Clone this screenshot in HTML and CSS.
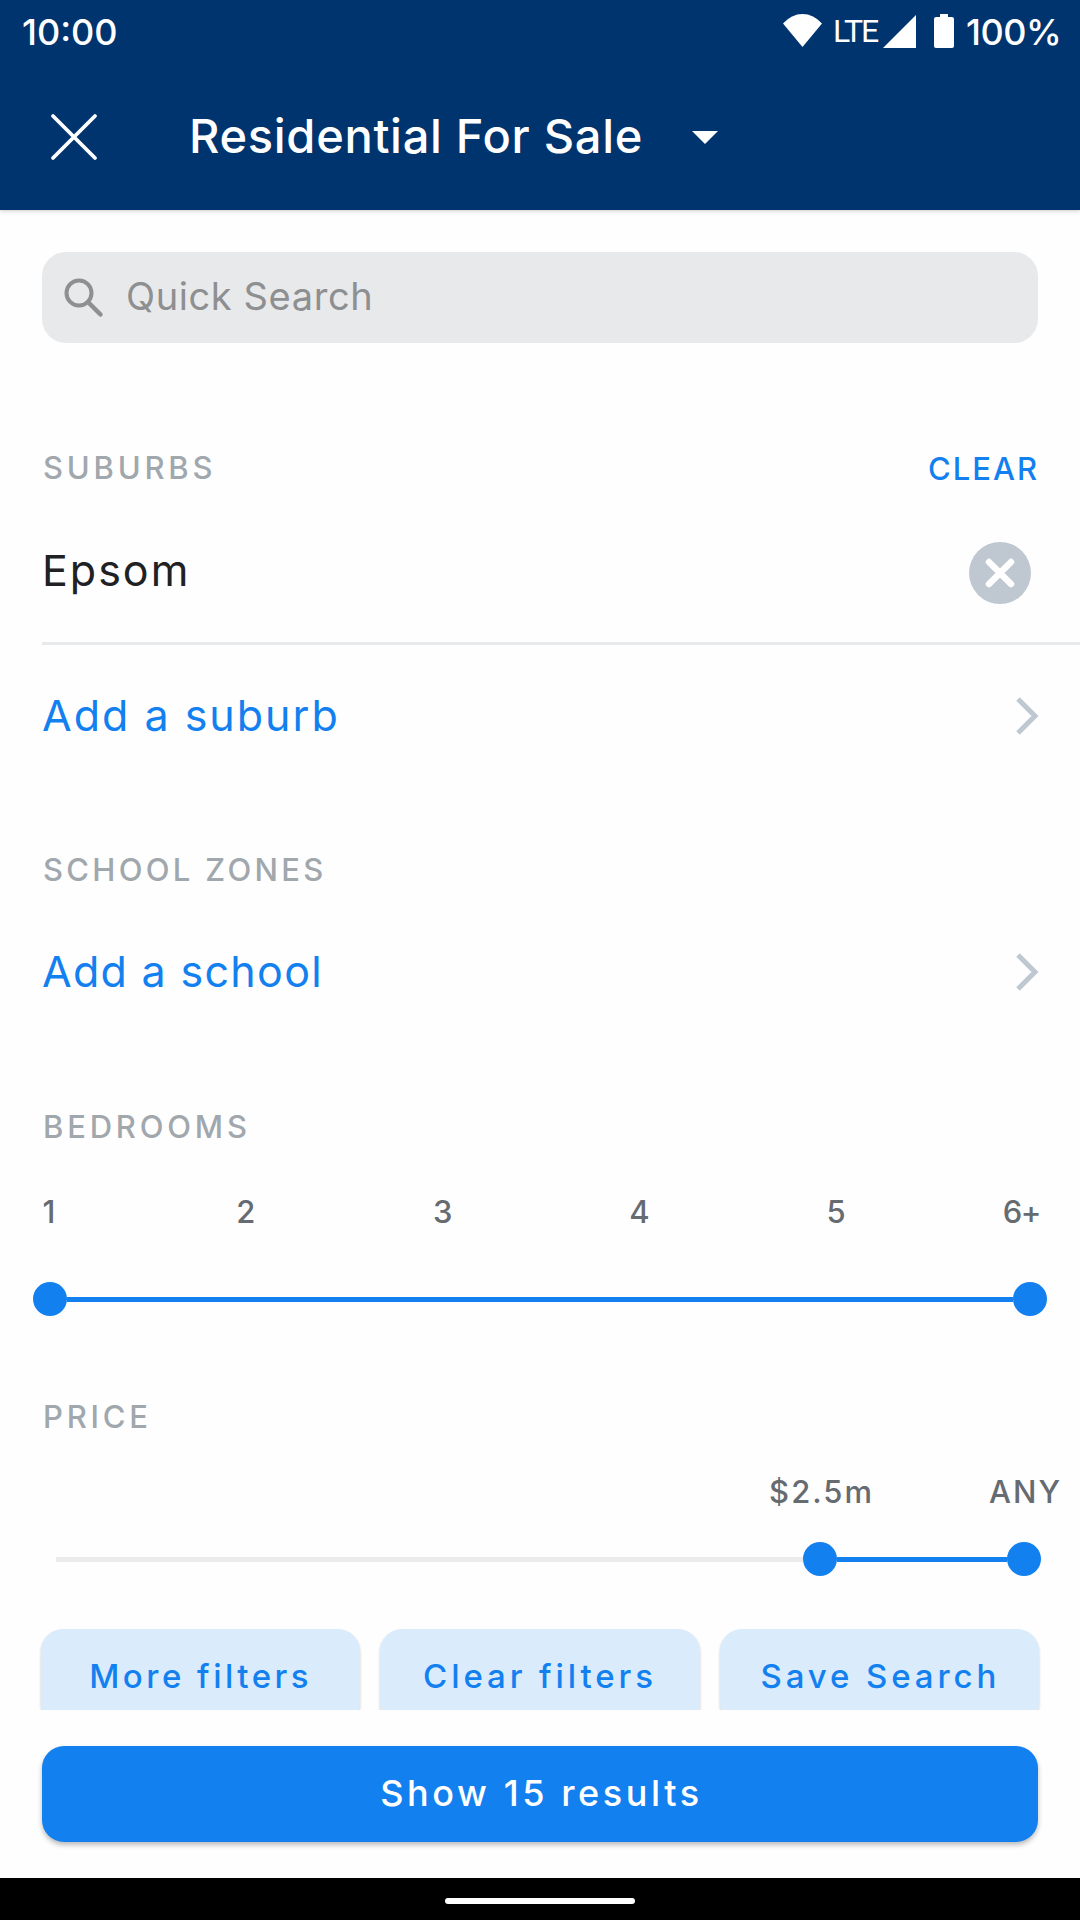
FILE: index.html
```html
<!DOCTYPE html>
<html lang="en">
<head>
  <meta charset="UTF-8">
  <meta name="viewport" content="width=device-width, initial-scale=1.0">
  <title>Residential For Sale</title>
  <link rel="stylesheet" href="styles.css">
</head>
<body>
  <header class="header">
    <div class="status-bar">
      <span class="time">10:00</span>
      <div class="status-icons">
        <svg class="wifi" width="39" height="33" viewBox="0 0 39 33"><path d="M0 9.500Q8.500 0 19.500 0T39 9.500L19.500 33z" fill="#fff"/></svg>
        <span class="lte">LTE</span>
        <svg class="signal" width="33" height="33" viewBox="0 0 33 33"><path d="M33 0v33H0z" fill="#fff"/></svg>
        <svg class="battery" width="20" height="34" viewBox="0 0 20 34"><path d="M6 0h8v3h4q2 0 2 2v27q0 2-2 2H2q-2 0-2-2V5q0-2 2-2h4z" fill="#fff"/></svg>
        <span class="percent">100%</span>
      </div>
    </div>
    <div class="app-bar">
      <svg class="close" width="48" height="48" viewBox="0 0 48 48"><path d="M3 3l42 42M45 3L3 45" stroke="#fff" stroke-width="3.800" stroke-linecap="round"/></svg>
      <h1 class="title">Residential For Sale</h1>
      <svg class="caret" width="26" height="13" viewBox="0 0 26 13"><path d="M0 0h26L13 13z" fill="#fff"/></svg>
    </div>
  </header>

  <main class="filters">
    <div class="search">
      <svg width="40" height="40" viewBox="0 0 40 40" fill="none" stroke="#8e8f91" stroke-width="4"><circle cx="15" cy="15" r="12.500"/><path d="M24 24l12.500 12.500" stroke-width="4.500" stroke-linecap="round"/></svg>
      <span class="placeholder">Quick Search</span>
    </div>

    <section class="suburbs">
      <div class="heading">
        <h2 class="label">SUBURBS</h2>
        <a class="clear">CLEAR</a>
      </div>
      <div class="row divided">
        <span class="suburb">Epsom</span>
        <svg class="remove" width="62" height="62" viewBox="0 0 62 62"><circle cx="31" cy="31" r="31" fill="#bfc8d0"/><path d="M20 20l22 22M42 20L20 42" stroke="#fff" stroke-width="6.500" stroke-linecap="round"/></svg>
      </div>
      <div class="row">
        <a class="add add-suburb">Add a suburb</a>
        <svg class="chevron" width="24" height="38" viewBox="0 0 24 38"><path d="M3 2l17 17L3 36" fill="none" stroke="#bfc8d0" stroke-width="5"/></svg>
      </div>
    </section>

    <section class="schools">
      <div class="heading"><h2 class="label">SCHOOL ZONES</h2></div>
      <div class="row">
        <a class="add add-school">Add a school</a>
        <svg class="chevron" width="24" height="38" viewBox="0 0 24 38"><path d="M3 2l17 17L3 36" fill="none" stroke="#bfc8d0" stroke-width="5"/></svg>
      </div>
    </section>

    <section class="bedrooms">
      <div class="heading"><h2 class="label">BEDROOMS</h2></div>
      <div class="ticks">
        <span>1</span><span>2</span><span>3</span><span>4</span><span>5</span><span>6+</span>
      </div>
      <div class="slider">
        <i class="thumb"></i><i class="range"></i><i class="thumb"></i>
      </div>
    </section>

    <section class="price">
      <div class="heading"><h2 class="label">PRICE</h2></div>
      <div class="values">
        <span class="from">$2.5m</span><span class="to">ANY</span>
      </div>
      <div class="slider">
        <i class="track"></i><i class="thumb"></i><i class="range"></i><i class="thumb"></i>
      </div>
    </section>

    <div class="actions">
      <button class="action more">More filters</button>
      <button class="action reset">Clear filters</button>
      <button class="action save">Save Search</button>
    </div>
  </main>

  <footer class="footer">
    <button class="show">Show 15 results</button>
  </footer>
  <div class="nav-bar"><div class="pill"></div></div>
</body>
</html>
```

FILE: styles.css
```css
* { box-sizing: border-box; }
body { margin: 0; width: 1080px; height: 1920px; display: flex; flex-direction: column; overflow: hidden; background: #fefefe; font-family: Inter, sans-serif; font-weight: 500; line-height: 1.2; }
h1, h2 { margin: 0; font-weight: 500; }
svg { display: block; flex: none; }
span, a, h1, h2, button { white-space: nowrap; }
button { border: none; font-family: inherit; font-weight: 500; }

.header { height: 210px; flex: none; background: #00346f; color: #fff; box-shadow: 0 1px 4px #0003; }
.status-bar { height: 64px; padding: 0 21px 0 22px; display: flex; align-items: center; justify-content: space-between; }
.time { margin-top: 2px; font-size: 36px; }
.status-icons { display: flex; align-items: center; }
.wifi { margin-right: 11px; margin-bottom: 3px; }
.lte { font-family: Roboto, sans-serif; font-weight: 400; font-size: 32px; width: 50px; letter-spacing: -2px; margin-bottom: 1px; }
.signal { margin-right: 18px; margin-bottom: 2px; }
.battery { margin-right: 12px; margin-bottom: 2px; }
.percent { margin-top: 2px; font-size: 36px; width: 93px; letter-spacing: -0.5px; }
.app-bar { height: 146px; padding: 0 50px; display: flex; align-items: center; }
.title { margin: -2px 0 0 91px; width: 454px; font-size: 47px; letter-spacing: 0.7px; }
.caret { margin-left: 49px; }

.filters { flex: 1; min-height: 0; overflow: hidden; padding: 42px 0 0 42px; }
.search { height: 91px; margin-right: 42px; padding-left: 22px; display: flex; align-items: center; gap: 22px; background: #e8e9eb; border-radius: 24px; }
.placeholder { margin-top: -1px; font-size: 38px; font-weight: 400; color: #8e8f91; letter-spacing: 0.6px; }

.suburbs { margin-top: 95px; }
.schools { margin-top: 54px; }
.bedrooms { margin-top: 56px; }
.price { margin-top: 71px; }
.heading { height: 60px; padding: 0 41px 0 1px; display: flex; align-items: center; justify-content: space-between; }
.label { font-size: 31px; color: #a0a7ad; letter-spacing: 3.8px; }
.schools .label { letter-spacing: 3.3px; }
.clear { margin-top: 1px; font-size: 31px; color: #1380f0; letter-spacing: 2px; }
.row { height: 141px; padding-right: 41px; display: flex; align-items: center; justify-content: space-between; }
.divided { height: 147px; padding-right: 49px; border-bottom: 3px solid #e8e9eb; }
.suburb { margin-top: 2px; font-size: 43px; font-weight: 400; color: #202124; letter-spacing: 2px; }
.remove { margin-top: 5px; }
.add { font-size: 43px; font-weight: 400; color: #1380f0; letter-spacing: 2px; }
.add-school { margin-top: 2px; letter-spacing: 1.3px; }
.schools .chevron { margin-top: 2px; }

.ticks { height: 60px; margin: 25px 37px 0 -3px; display: flex; align-items: center; justify-content: space-between; font-size: 31px; color: #666b71; }
.ticks span { width: 20px; display: flex; justify-content: center; }
.ticks span:last-child { padding-right: 3px; justify-content: flex-end; letter-spacing: -1.5px; }
.slider { height: 34px; display: flex; align-items: center; }
.bedrooms .slider { margin: 40px 33px 0 -9px; }
.price .slider { margin: 20px 39px 0 14px; }
.thumb { width: 34px; height: 34px; border-radius: 50%; background: #1380f0; }
.range { flex: 1; height: 5px; background: #1380f0; }
.track { width: 747px; height: 5px; background: #ebebeb; }
.values { height: 60px; margin: 15px 18px 0 0; display: flex; align-items: center; justify-content: flex-end; gap: 115px; font-size: 31px; color: #666b71; letter-spacing: 2px; }

.actions { margin: 53px 41px 0 -1px; display: grid; grid-template-columns: repeat(3, 1fr); gap: 20px; }
.action { height: 96px; padding: 0 0 3px; border-radius: 22px; background: #daebfc; color: #1380f0; font-size: 33px; box-shadow: 0 2px 3px #0003; }
.more { letter-spacing: 3.5px; }
.reset { letter-spacing: 3.9px; }
.save { padding-left: 2px; letter-spacing: 3.9px; }

.footer { height: 168px; flex: none; padding: 36px 42px; background: #fefefe; }
.show { width: 100%; height: 96px; padding: 0 0 2px 3px; border-radius: 22px; background: #1380f0; color: #fff; font-size: 36px; letter-spacing: 3.6px; box-shadow: 0 3px 5px #0004; }
.nav-bar { height: 42px; flex: none; padding-top: 3px; display: flex; align-items: center; justify-content: center; background: #000; }
.pill { width: 190px; height: 6px; border-radius: 3px; background: #fff; }
```
